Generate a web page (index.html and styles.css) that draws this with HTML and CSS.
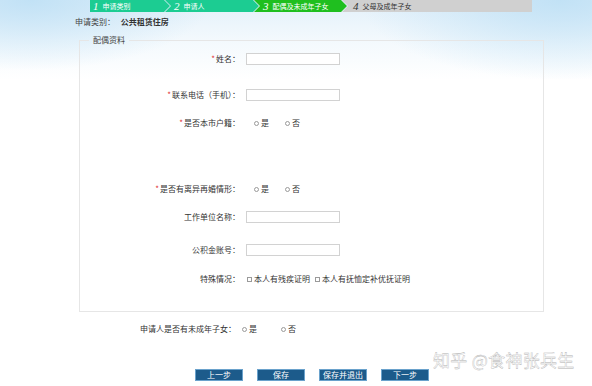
FILE: index.html
```html
<!DOCTYPE html>
<html lang="zh">
<head>
<meta charset="utf-8">
<title>配偶及未成年子女</title>
<link rel="stylesheet" href="styles.css">
</head>
<body>
<div class="page">
  <div class="steps">
    <div class="step step-1 done"><i>1</i>申请类别</div>
    <div class="step step-2 done"><i>2</i>申请人</div>
    <div class="step step-3 current"><i>3</i>配偶及未成年子女</div>
    <div class="step step-4"><i>4</i>父母及成年子女</div>
  </div>

  <div class="category">申请类别： <b>公共租赁住房</b></div>

  <fieldset class="box">
    <legend>配偶资料</legend>
    <div class="row">
      <label class="lbl"><em>*</em>姓名：</label>
      <span class="input"></span>
    </div>
    <div class="row gap-l">
      <label class="lbl"><em>*</em>联系电话（手机）：</label>
      <span class="input"></span>
    </div>
    <div class="row gap-s">
      <label class="lbl"><em>*</em>是否本市户籍：</label>
      <span class="choices"><span class="opt"><span class="radio"></span>是</span><span class="opt"><span class="radio"></span>否</span></span>
    </div>
    <div class="row gap-xl">
      <label class="lbl"><em>*</em>是否有离异再婚情形：</label>
      <span class="choices"><span class="opt"><span class="radio"></span>是</span><span class="opt"><span class="radio"></span>否</span></span>
    </div>
    <div class="row gap-s">
      <label class="lbl">工作单位名称：</label>
      <span class="input"></span>
    </div>
    <div class="row gap-m">
      <label class="lbl">公积金账号：</label>
      <span class="input"></span>
    </div>
    <div class="row gap-t">
      <label class="lbl">特殊情况：</label>
      <span class="checks"><span class="chk"><span class="box-chk"></span>本人有残疾证明</span><span class="chk"><span class="box-chk"></span>本人有抚恤定补优抚证明</span></span>
    </div>
  </fieldset>

  <div class="kids">
    <span class="kids-lbl">申请人是否有未成年子女：</span>
    <span class="choices wide"><span class="opt"><span class="radio"></span>是</span><span class="opt"><span class="radio"></span>否</span></span>
  </div>

  <div class="actions">
    <button class="btn">上一步</button>
    <button class="btn">保存</button>
    <button class="btn">保存并退出</button>
    <button class="btn">下一步</button>
  </div>

  <div class="watermark">知乎 @食神张兵生</div>
</div>
</body>
</html>
```

FILE: styles.css
```css
* { box-sizing: border-box; }
html, body { margin: 0; padding: 0; }
body {
  width: 592px;
  height: 386px;
  overflow: hidden;
  font-family: "Noto Sans CJK SC", "Noto Sans", sans-serif;
  font-size: 8px;
  color: #333;
  background:
    radial-gradient(ellipse 180px 70px at 30px 0, rgba(190, 224, 245, 0.9), rgba(255,255,255,0) 100%),
    radial-gradient(ellipse 200px 80px at 560px 0, rgba(190, 224, 245, 0.9), rgba(255,255,255,0) 100%),
    linear-gradient(#e2f0fa 0, #f3f9fd 40px, #fff 80px);
}
.page { position: relative; width: 592px; height: 386px; }

/* steps */
.steps {
  display: flex;
  margin-left: 90px;
  width: 442px;
  height: 12px;
}
.step {
  display: flex;
  align-items: center;
  height: 12px;
  color: #fff;
  font-size: 7px;
  line-height: 12px;
  white-space: nowrap;
  clip-path: polygon(0 0, calc(100% - 6px) 0, 100% 50%, calc(100% - 6px) 100%, 0 100%, 6px 50%);
  margin-left: -5px;
  padding-left: 9px;
}
.step i {
  font-family: "Liberation Serif", serif;
  font-style: italic;
  font-size: 11px;
  margin-right: 4px;
  line-height: 12px;
}
.step-1 { width: 80px; margin-left: 0; padding-left: 3px; clip-path: polygon(0 0, calc(100% - 6px) 0, 100% 50%, calc(100% - 6px) 100%, 0 100%); }
.step-2 { width: 94px; }
.step-3 { width: 93px; }
.step-4 { flex: 1; clip-path: polygon(0 0, 100% 0, 100% 100%, 0 100%, 6px 50%); color: #333; padding-left: 11px; }
.done { background: #1ccc92; }
.current { background: #1fbf1f; }
.step-4 { background: #d0d0d0; }

.category {
  margin: 4px 0 0 75px;
  height: 12px;
  line-height: 12px;
  font-size: 8px;
  color: #444;
}
.category b { font-weight: bold; margin-left: 4px; color: #333; }

/* fieldset */
.box {
  margin: 6px 0 0 79px;
  width: 465px;
  padding: 7px 0 26px 0;
  border: 1px solid #e6e6e6;
  min-width: 0;
}
.box legend {
  margin-left: 9px;
  padding: 0 4px;
  font-size: 8px;
  line-height: 12px;
  color: #444;
}
.row {
  display: grid;
  grid-template-columns: 160px auto;
  column-gap: 6px;
  align-items: center;
  height: 12px;
}
.gap-s { margin-top: 16px; }
.gap-t { margin-top: 17px; }
.gap-m { margin-top: 21px; }
.gap-l { margin-top: 24px; }
.gap-xl { margin-top: 54px; }
.lbl {
  text-align: right;
  line-height: 12px;
  color: #333;
}
.lbl em { color: #e03030; font-style: normal; margin-right: 1px; }
.input {
  display: block;
  width: 94px;
  height: 12px;
  border: 1px solid #d2d2d2;
  background: #fff;
}
.choices { display: flex; gap: 16px; padding-left: 8px; line-height: 12px; }
.choices.wide { gap: 24px; padding-left: 0; }
.opt { display: inline-flex; align-items: center; }
.radio {
  display: inline-block;
  width: 5px;
  height: 5px;
  border: 1px solid #9a9a9a;
  border-radius: 50%;
  margin-right: 2px;
}
.checks { display: flex; gap: 5px; line-height: 12px; padding-left: 1px; }
.chk { display: inline-flex; align-items: center; }
.box-chk {
  display: inline-block;
  width: 5px;
  height: 5px;
  border: 1px solid #9a9a9a;
  margin-right: 2px;
}

/* kids */
.kids {
  display: flex;
  align-items: center;
  margin: 11px 0 0 140px;
  height: 12px;
  line-height: 12px;
}
.kids-lbl { width: 102px; }

/* actions */
.actions {
  display: flex;
  gap: 14px;
  margin: 34px 0 0 195px;
}
.btn {
  width: 48px;
  height: 12px;
  padding: 0;
  border: 1px solid #6aa2cc;
  background: #1c5b8b;
  color: #fff;
  font-family: "Noto Sans CJK SC", sans-serif;
  font-size: 8px;
  line-height: 10px;
}

.watermark {
  position: absolute;
  left: 433px;
  top: 348px;
  font-size: 17px;
  line-height: 24px;
  color: #fff;
  -webkit-text-stroke: 0.35px #b0b0b0;
  letter-spacing: 0.3px;
}
```
